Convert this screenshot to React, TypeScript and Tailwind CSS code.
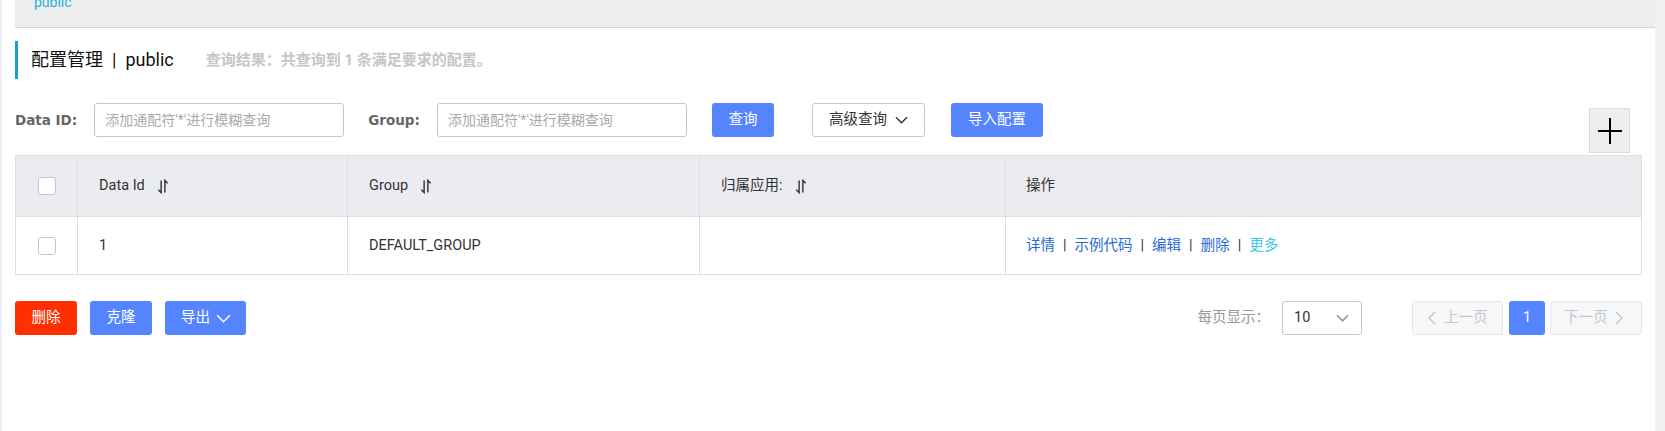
import React from "react"

const Chevron = ({ className = "" }: { className?: string }) => (
    <svg viewBox="0 0 14 8" className={className} fill="none" stroke="currentColor" strokeWidth="1.4">
        <path d="M1 1 L7 7 L13 1" />
    </svg>
)

const SortIcon = () => (
    <svg viewBox="0 0 12 16" className="ml-[12px] h-[15px] w-[12px] text-[#333]" fill="none" stroke="currentColor" strokeWidth="1.5">
        <path d="M4 1.5 V14.5 L1 11.5" />
        <path d="M8 14.5 V1.5 L11 4.5" />
    </svg>
)

const Checkbox = () => <div className="mx-auto h-[18px] w-[18px] rounded-[3px] border border-[#c4c6cf] bg-white" />

const Sep = () => <span className="mx-[8px] text-[#333]">|</span>

export default function App() {
    const label = "flex h-[34px] items-center text-[13.5px] font-bold text-[#666] [font-family:'DejaVu_Sans',sans-serif]"
    const input = "h-[34px] w-[250px] rounded-[3px] border border-[#c4c6cf] bg-white pl-[10px] text-[14px] outline-none placeholder:text-[#aaa]"

    return (
        <div className="flex h-[431px] w-full bg-white text-[14.5px] text-[#333] [font-family:Roboto,'Noto_Sans_CJK_SC',sans-serif]">
            <div className="w-[2px] bg-[#eceef2]" />
            <div className="flex flex-1 flex-col pl-[13px] pr-[13px]">
                <div className="-mr-[13px] h-[28px] overflow-hidden border-b border-[#d6d6d6] bg-[#eeeeee] pl-[19px]">
                    <div className="-mt-[8px] text-[14px] leading-[20px] text-[#24b3dd]">public</div>
                </div>

                <div className="mt-[13px] flex h-[38px] items-center border-l-[3px] border-[#1a9bd5] pl-[13px]">
                    <span className="-mt-[2px] text-[18px] text-[#111]">配置管理</span>
                    <span className="-mt-[2px] mx-[9px] text-[18px] text-[#111]">|</span>
                    <span className="-mt-[2px] text-[18px] text-[#111]">public</span>
                    <span className="ml-[32px] text-[15px] font-bold text-[#c6c6c6]">查询结果：共查询到 1 条满足要求的配置。</span>
                </div>

                <div className="mt-[24px] flex h-[50px] items-start">
                    <div className={label}>Data ID:</div>
                    <input className={`${input} ml-[17px]`} placeholder="添加通配符'*'进行模糊查询" />
                    <div className={`${label} ml-[24px]`}>Group:</div>
                    <input className={`${input} ml-[17px]`} placeholder="添加通配符'*'进行模糊查询" />
                    <button className="ml-[25px] h-[34px] w-[62px] rounded-[3px] bg-[#5584ff] text-white">查询</button>
                    <button className="ml-[38px] flex h-[34px] w-[113px] items-center rounded-[3px] border border-[#c4c6cf] bg-white pl-[16px] text-[#333]">
                        高级查询
                        <Chevron className="ml-[8px] h-[8px] w-[13px]" />
                    </button>
                    <button className="ml-[26px] h-[34px] w-[92px] rounded-[3px] bg-[#5584ff] text-white">导入配置</button>
                    <div className="mr-[12px] ml-auto mt-[5px] flex h-[45px] w-[41px] items-center justify-center border border-[#dcdcdc] bg-[#eeeeee]">
                        <svg viewBox="0 0 24 26" className="h-[26px] w-[24px]" stroke="#000" strokeWidth="2">
                            <path d="M0 13 H24 M12 0 V26" />
                        </svg>
                    </div>
                </div>

                <table className="mt-[2px] w-full table-fixed border-collapse border border-[#dcdee3] text-left">
                    <colgroup>
                        <col className="w-[62px]" />
                        <col className="w-[270px]" />
                        <col className="w-[352px]" />
                        <col className="w-[306px]" />
                        <col />
                    </colgroup>
                    <thead>
                        <tr className="h-[61px] bg-[#ebecf0]">
                            <th className="border border-[#dcdee3] font-normal"><Checkbox /></th>
                            <th className="border border-[#dcdee3] pl-[21px] font-normal">
                                <div className="flex items-center">Data Id<SortIcon /></div>
                            </th>
                            <th className="border border-[#dcdee3] pl-[21px] font-normal">
                                <div className="flex items-center">Group<SortIcon /></div>
                            </th>
                            <th className="border border-[#dcdee3] pl-[21px] font-normal">
                                <div className="flex items-center">归属应用:<SortIcon /></div>
                            </th>
                            <th className="border border-[#dcdee3] pl-[20px] font-normal">操作</th>
                        </tr>
                    </thead>
                    <tbody>
                        <tr className="h-[58px]">
                            <td className="border border-[#dcdee3]"><Checkbox /></td>
                            <td className="border border-[#dcdee3] pl-[21px]">1</td>
                            <td className="border border-[#dcdee3] pl-[21px]">DEFAULT_GROUP</td>
                            <td className="border border-[#dcdee3]" />
                            <td className="border border-[#dcdee3] pl-[20px]">
                                <a className="text-[#2a6ad6]">详情</a><Sep />
                                <a className="text-[#2a6ad6]">示例代码</a><Sep />
                                <a className="text-[#2a6ad6]">编辑</a><Sep />
                                <a className="text-[#2a6ad6]">删除</a><Sep />
                                <a className="text-[#3ccbe6]">更多</a>
                            </td>
                        </tr>
                    </tbody>
                </table>

                <div className="mt-[26px] flex h-[34px] items-center">
                    <button className="h-[34px] w-[62px] rounded-[3px] bg-[#ff3000] text-white">删除</button>
                    <button className="ml-[13px] h-[34px] w-[62px] rounded-[3px] bg-[#5584ff] text-white">克隆</button>
                    <button className="ml-[13px] flex h-[34px] w-[81px] items-center rounded-[3px] bg-[#5584ff] pl-[16px] text-white">
                        导出
                        <Chevron className="ml-[6px] h-[9px] w-[15px]" />
                    </button>

                    <div className="ml-auto flex items-center">
                        <span className="text-[#999]">每页显示：</span>
                        <div className="ml-[12px] flex h-[34px] w-[80px] items-center justify-between rounded-[3px] border border-[#c4c6cf] pl-[11px] pr-[12px]">
                            <span className="text-[#333]">10</span>
                            <Chevron className="h-[8px] w-[13px] text-[#888]" />
                        </div>
                        <button className="ml-[50px] flex h-[34px] w-[91px] items-center rounded-[3px] border border-[#e6e7eb] bg-[#f6f7f9] pl-[15px] text-[#c4c6cf]">
                            <svg viewBox="0 0 8 14" className="h-[14px] w-[8px]" fill="none" stroke="currentColor" strokeWidth="1.5">
                                <path d="M7 1 L1 7 L7 13" />
                            </svg>
                            <span className="ml-[8px]">上一页</span>
                        </button>
                        <button className="ml-[6px] h-[34px] w-[36px] rounded-[3px] bg-[#5584ff] text-white">1</button>
                        <button className="ml-[5px] flex h-[34px] w-[92px] items-center rounded-[3px] border border-[#e6e7eb] bg-[#f6f7f9] pl-[13px] text-[#c4c6cf]">
                            <span>下一页</span>
                            <svg viewBox="0 0 8 14" className="ml-[7px] h-[14px] w-[8px]" fill="none" stroke="currentColor" strokeWidth="1.5">
                                <path d="M1 1 L7 7 L1 13" />
                            </svg>
                        </button>
                    </div>
                </div>
            </div>
            <div className="w-[10px] bg-[#f1f1f1]" />
        </div>
    )
}
